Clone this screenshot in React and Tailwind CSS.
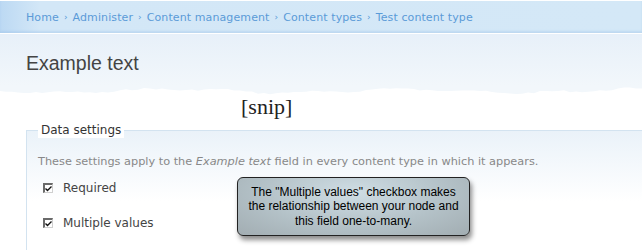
import React from "react";

function TornEdge() {
  const pts = [];
  const w = 642;
  let seed = 7;
  const rnd = () => {
    seed = (seed * 9301 + 49297) % 233280;
    return seed / 233280;
  };
  for (let x = 0; x <= w; x += 6) {
    const base = 4 + Math.sin(x / 37) * 1.8 + Math.sin(x / 13) * 1.1;
    pts.push(`${x},${(base + rnd() * 1.8).toFixed(1)}`);
  }
  const d = `M0,10 L${pts.join(" L")} L${w},10 Z`;
  return (
    <svg width="642" height="10" viewBox="0 0 642 10" className="block">
      <path d={d} fill="#ffffff" />
    </svg>
  );
}

function Check() {
  return (
    <span className="w-[10px] h-[10px] border-l-2 border-t-2 border-l-[#6a6a6a] border-t-[#6a6a6a] border-r border-b border-r-[#d0d0d0] border-b-[#d0d0d0] bg-white flex items-center justify-center">
      <svg width="7" height="6" viewBox="0 0 7 6" className="block">
        <path d="M0.5 2.5 L2.5 4.5 L6.5 0.5" stroke="#111" strokeWidth="1.4" fill="none" />
      </svg>
    </span>
  );
}

export default function App() {
  return (
    <div className="w-[642px] h-[250px] overflow-hidden bg-white font-['DejaVu_Sans',Verdana,sans-serif]">
      <div className="h-[1px] bg-white" />
      <div className="h-[32px] bg-[linear-gradient(to_right,#bcd9f3_0px,#d3e7f7_40px,#d4e8f7_100%)] shadow-[inset_0_-2px_2px_rgba(150,190,230,0.35)] flex items-center pl-[26px] pt-[2px] text-[11px] tracking-[0.1px] text-[#5b9bd8]">
        <span>Home</span>
        <span className="mx-[5px] text-[9px]">›</span>
        <span>Administer</span>
        <span className="mx-[5px] text-[9px]">›</span>
        <span>Content management</span>
        <span className="mx-[5px] text-[9px]">›</span>
        <span>Content types</span>
        <span className="mx-[5px] text-[9px]">›</span>
        <span>Test content type</span>
      </div>
      <div className="h-[1px] bg-white" />
      <div className="h-[52px] bg-[linear-gradient(to_bottom,#e7f0f9,#f2f7fb)] pl-[26px] pt-[17px]">
        <div className="font-['Liberation_Sans',Arial,sans-serif] text-[19.5px] text-[#444] leading-[24px]">Example text</div>
      </div>
      <div className="h-[10px] bg-[#f2f7fb]">
        <TornEdge />
      </div>
      <div className="h-[35px] pl-[241px] -mt-[1px] font-['Liberation_Serif','Times_New_Roman',serif] text-[22px] text-[#222] leading-[24px]">
        [snip]
      </div>
      <div className="relative ml-[26px] border-l border-t border-[#d3e3f0] bg-[linear-gradient(to_bottom,#eaf2f9,#ffffff_70px)] h-[140px]">
        <div className="absolute -top-[9px] left-[11px] px-[3px] bg-white text-[12px] leading-[16px] text-[#333]">Data settings</div>
        <div className="pt-[24px] pl-[11px] text-[11.3px] text-[#888] leading-[14px] whitespace-nowrap">
          These settings apply to the <em>Example text</em> field in every content type in which it appears.
        </div>
        <div className="pl-[16px] mt-[12px] flex flex-col gap-[21px]">
          <div className="flex items-center h-[14px]">
            <Check />
            <span className="ml-[10px] text-[12px] text-[#444]">Required</span>
          </div>
          <div className="flex items-center h-[14px]">
            <Check />
            <span className="ml-[10px] text-[12px] text-[#444]">Multiple values</span>
          </div>
        </div>
        <div className="absolute left-[210px] top-[46px] w-[233px] h-[59px] rounded-[6px] border border-[#222] bg-[radial-gradient(ellipse_at_50%_25%,#cfdde4_0%,#b4c2c8_55%,#a2adb2_100%)] shadow-[2px_4px_5px_rgba(0,0,0,0.45)] flex flex-col items-center justify-center font-['Liberation_Sans',Arial,sans-serif] text-[12px] leading-[14.5px] text-black text-center">
          <div>The "Multiple values" checkbox makes</div>
          <div>the relationship between your node and</div>
          <div>this field one-to-many.</div>
        </div>
      </div>
    </div>
  );
}
